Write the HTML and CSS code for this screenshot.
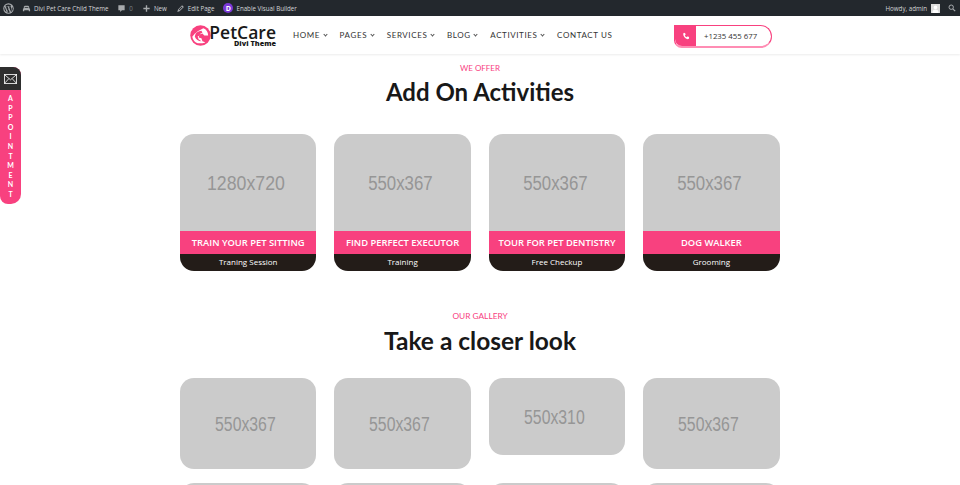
FILE: index.html
```html
<!DOCTYPE html>
<html lang="en">
<head>
  <meta charset="UTF-8">
  <meta name="viewport" content="width=device-width, initial-scale=1.0">
  <title>Pet Care</title>
  <link rel="stylesheet" href="styles.css">
</head>
<body>
  <div class="adminBar">
    <div class="adminLeft">
      <svg class="wpLogo" viewBox="0 0 20 20"><circle cx="10" cy="10" r="9.5" fill="#a7aaad"/><path d="M2.5 10c0 3 1.700 5.500 4.200 6.700L3.100 7a7.500 7.500 0 0 0-.6 3zm12.500-.4c0-.9-.3-1.600-.6-2.100-.4-.6-.7-1.100-.7-1.700 0-.7.500-1.300 1.200-1.300A7.500 7.500 0 0 0 3.600 6.100h.5c.8 0 2-.1 2-.1.400 0 .5.600.1.600 0 0-.4.100-.9.100l2.800 8.400 1.700-5.100-1.200-3.300c-.4 0-.8-.1-.8-.1-.4 0-.4-.6 0-.6 0 0 1.300.1 2 .1.800 0 2-.1 2-.1.400 0 .5.600.1.600 0 0-.4.100-.9.100l2.800 8.300.8-2.500c.3-1 .6-1.800.6-2.500zM10.100 10.700l-2.300 6.700a7.500 7.500 0 0 0 4.600-.1l-.1-.1zm6.600-4.300c0 .3.100.6.100 1 0 .8-.2 1.700-.6 2.800l-2.300 6.700A7.500 7.500 0 0 0 16.700 6.400z" fill="#23282d"/></svg>
      <span class="adminItem">
        <svg class="adminIcon" viewBox="0 0 20 20"><path d="M2 16v-3c0-2 1-3 2-4V6c1-2 3-2 6-2s5 0 6 2v3c1 1 2 2 2 4v3h-3v-2H5v2zM6 9h8V7H6z" fill="#a7aaad"/></svg>
        Divi Pet Care Child Theme
      </span>
      <span class="adminItem muted">
        <svg class="adminIcon" viewBox="0 0 20 20"><path d="M3 3h14v11h-6l-4 4v-4H3z" fill="#a7aaad"/></svg>
        0
      </span>
      <span class="adminItem">
        <svg class="adminIcon" viewBox="0 0 20 20"><path d="M8.500 3h3v5.500H17v3h-5.500V17h-3v-5.500H3v-3h5.500z" fill="#a7aaad"/></svg>
        New
      </span>
      <span class="adminItem">
        <svg class="adminIcon" viewBox="0 0 20 20"><path d="M13.500 2.500l4 4L8 16l-5 1.500L4.500 12zM6 12.500l1.500 1.500 7-7L13 5.500z" fill="#a7aaad"/></svg>
        Edit Page
      </span>
      <span class="adminItem">
        <span class="diviBadge">D</span>
        Enable Visual Builder
      </span>
    </div>
    <div class="adminRight">
      <span>Howdy, admin</span>
      <svg class="avatar" viewBox="0 0 10 10"><rect width="10" height="10" fill="#ddd"/><circle cx="5" cy="3.800" r="2" fill="#fff"/><path d="M1.500 10c0-3 1.500-4 3.500-4s3.500 1 3.500 4z" fill="#fff"/></svg>
      <svg class="searchIcon" viewBox="0 0 20 20"><circle cx="8" cy="8" r="5.500" fill="none" stroke="#a7aaad" stroke-width="2.500"/><path d="M12 12l6 6" stroke="#a7aaad" stroke-width="3"/></svg>
    </div>
  </div>

  <header class="siteHeader">
    <div class="headerRow">
      <div class="logo">
        <svg class="logoMark" viewBox="0 0 22 22">
          <circle cx="11" cy="11" r="10.700" fill="#f8417f"/>
          <path d="M14 3.500c3 1 5 4 5 7.500h-4l-2-2-3 1-1 3 3 1 1 3 3 1c-1 .6-2.500 1-4 1H8c-3-1-5.500-4-5.500-7 1-1 2-3 4-4 2-2 5-3 7.500-4.500z" fill="#fff"/>
          <path d="M6 9c2-2 4-3 6-3l1 2-2 1-1 2-2 1 1 3 3 2c-3 0-6-2-7-5z" fill="#f8417f"/>
        </svg>
        <div class="logoText">
          <span class="logoName">PetCare</span>
          <span class="logoSub">Divi Theme</span>
        </div>
      </div>
      <nav class="mainNav">
        <a>HOME <i class="caret"></i></a>
        <a>PAGES <i class="caret"></i></a>
        <a>SERVICES <i class="caret"></i></a>
        <a>BLOG <i class="caret"></i></a>
        <a>ACTIVITIES <i class="caret"></i></a>
        <a>CONTACT US</a>
      </nav>
      <div class="phoneBox">
        <span class="phoneIcon">
          <svg viewBox="0 0 20 20"><path d="M5 2l3 1 1 4-2 2c1 2 2 3 4 4l2-2 4 1 1 3c-1 2-2 3-4 3C8 17 3 11 3 5c0-1 1-2 2-3z" fill="#fff"/></svg>
        </span>
        <span class="phoneNum">+1235 455 677</span>
      </div>
    </div>
  </header>

  <aside class="sideTab">
    <div class="sideMail">
      <svg viewBox="0 0 16 12"><rect x=".5" y=".5" width="15" height="11" fill="none" stroke="#fff"/><path d="M.5.500L8 7l7.500-6.500M.5 11.500L6 5.500M15.500 11.500L10 5.500" fill="none" stroke="#fff"/></svg>
    </div>
    <div class="sideLabel">
      <span>A</span><span>P</span><span>P</span><span>O</span><span>I</span><span>N</span><span>T</span><span>M</span><span>E</span><span>N</span><span>T</span>
    </div>
  </aside>

  <section class="offer">
    <p class="eyebrow">WE OFFER</p>
    <h2 class="title">Add On Activities</h2>
    <div class="cardGrid">
      <div class="card">
        <div class="ph phLarge"><span class="wide">1280x720</span></div>
        <div class="cardName">TRAIN YOUR PET SITTING</div>
        <div class="cardSub">Traning Session</div>
      </div>
      <div class="card">
        <div class="ph phLarge"><span class="mid">550x367</span></div>
        <div class="cardName">FIND PERFECT EXECUTOR</div>
        <div class="cardSub">Training</div>
      </div>
      <div class="card">
        <div class="ph phLarge"><span class="mid">550x367</span></div>
        <div class="cardName">TOUR FOR PET DENTISTRY</div>
        <div class="cardSub">Free Checkup</div>
      </div>
      <div class="card">
        <div class="ph phLarge"><span class="mid">550x367</span></div>
        <div class="cardName">DOG WALKER</div>
        <div class="cardSub">Grooming</div>
      </div>
    </div>
  </section>

  <section class="gallery">
    <p class="eyebrow">OUR GALLERY</p>
    <h2 class="title">Take a closer look</h2>
    <div class="galleryGrid">
      <div class="ph shot"><span class="thin">550x367</span></div>
      <div class="ph shot"><span class="thin">550x367</span></div>
      <div class="ph shot short"><span class="thin">550x310</span></div>
      <div class="ph shot"><span class="thin">550x367</span></div>
      <div class="ph shot"></div>
      <div class="ph shot"></div>
      <div class="ph shot"></div>
      <div class="ph shot"></div>
    </div>
  </section>
</body>
</html>
```

FILE: styles.css
```css
html, body{
  height: 485px;
  overflow: hidden;
}
body{
  margin: 0;
  background: white;
  color: #181818;
  font-family: "Lato", "Open Sans", sans-serif;
}

/* admin bar */
.adminBar{
  height: 16px;
  background: #23282d;
  color: #d5d7d9;
  font-family: "Open Sans", sans-serif;
  font-size: 6.2px;
  display: flex;
  justify-content: space-between;
  align-items: center;
  padding: 0 4px 0 3px;
}
.adminLeft, .adminRight, .adminItem{
  display: flex;
  align-items: center;
}
.adminLeft{
  gap: 9px;
}
.adminItem{
  gap: 3px;
}
.muted{
  color: #7d8286;
}
.wpLogo{
  width: 11px;
  height: 11px;
  margin-right: -1px;
}
.adminIcon{
  width: 9px;
  height: 9px;
}
.diviBadge{
  width: 10px;
  height: 10px;
  border-radius: 50%;
  background: #7b38d8;
  color: white;
  font-size: 7px;
  font-weight: bold;
  display: flex;
  justify-content: center;
  align-items: center;
}
.adminRight{
  gap: 4px;
}
.avatar{
  width: 9px;
  height: 9px;
}
.searchIcon{
  width: 8px;
  height: 8px;
  margin-left: 4px;
}

/* header */
.siteHeader{
  height: 38px;
  background: white;
  box-shadow: 0 1px 2px rgba(0, 0, 0, 0.08);
}
.headerRow{
  width: 582px;
  height: 100%;
  margin-left: 190px;
  display: flex;
  align-items: center;
}
.logo{
  display: flex;
  align-items: center;
  gap: 0;
  width: 103px;
  margin-top: 1px;
}
.logoMark{
  width: 21px;
  height: 21px;
}
.logoText{
  display: flex;
  flex-direction: column;
  align-items: flex-end;
  width: 65px;
}
.logoName{
  font-family: "Open Sans", sans-serif;
  font-size: 17.500px;
  line-height: 15px;
  font-weight: 600;
}
.logoSub{
  font-family: "Open Sans", sans-serif;
  font-size: 7.300px;
  line-height: 7px;
  font-weight: 800;
}
.mainNav{
  display: flex;
  gap: 13px;
  font-size: 8px;
  letter-spacing: 0.6px;
  color: #333;
  font-weight: 400;
}
.caret{
  display: inline-block;
  width: 2px;
  height: 2px;
  margin: 0 0 2px 1px;
  border-right: 1px solid #555;
  border-bottom: 1px solid #555;
  transform: rotate(45deg);
}
.phoneBox{
  margin-left: auto;
  width: 98px;
  height: 23px;
  box-sizing: border-box;
  display: flex;
  align-items: center;
  border: 1px solid #f8417f;
  border-bottom-width: 2px;
  border-color: #f8417f #f8417f #ff8db4 #f8417f;
  border-radius: 0 12px 12px 8px;
  margin-top: 3px;
}
.phoneIcon{
  width: 21px;
  height: 100%;
  background: #f8417f;
  border-radius: 0 0 0 7px;
  display: flex;
  justify-content: center;
  align-items: center;
}
.phoneIcon svg{
  width: 8px;
  height: 8px;
}
.phoneNum{
  margin-left: 8px;
  font-family: "Open Sans", sans-serif;
  font-size: 7.800px;
  color: #333;
}

/* floating side tab */
.sideTab{
  position: absolute;
  left: 0;
  top: 67px;
  width: 21px;
  height: 137px;
  border-radius: 0 8px 10px 8px;
  overflow: hidden;
  background: #f8417f;
}
.sideMail{
  height: 23px;
  background: #2e2e2e;
  display: flex;
  justify-content: center;
  align-items: center;
}
.sideMail svg{
  width: 13px;
  height: 10px;
}
.sideLabel{
  display: flex;
  flex-direction: column;
  align-items: center;
  padding-top: 4px;
  color: white;
  font-size: 7px;
  line-height: 9.600px;
  font-weight: bold;
}

/* sections */
.offer, .gallery{
  width: 600px;
  margin: 0 auto;
  text-align: center;
}
.offer{
  padding-top: 10px;
}
.gallery{
  padding-top: 41px;
}
.eyebrow{
  margin: 0;
  font-size: 8px;
  line-height: 9px;
  color: #f8417f;
}
.title{
  margin: 3px 0 0;
  font-size: 24px;
  line-height: 32px;
  font-weight: bold;
  color: #181818;
}
.gallery .title{
  margin-top: 4px;
  font-size: 24.500px;
}
.gallery .eyebrow{
  font-size: 8.300px;
}
.cardGrid, .galleryGrid{
  display: grid;
  grid-template-columns: repeat(4, 136.400px);
  column-gap: 18px;
  align-items: start;
}
.cardGrid{
  margin-top: 26px;
}
.galleryGrid{
  margin-top: 21px;
  row-gap: 14px;
}
.card{
  border-radius: 14px;
  overflow: hidden;
}
.ph{
  box-sizing: border-box;
  background: #cbcbcb;
  color: #969696;
  font-family: "Liberation Sans", sans-serif;
  font-size: 20px;
  display: flex;
  justify-content: center;
  align-items: center;
  padding: 2px 4px 0 0;
}
.shot{
  padding-right: 6px;
}
.wide{
  transform: scaleX(0.886);
}
.mid{
  transform: scaleX(0.84);
}
.thin{
  transform: scaleX(0.79);
}
.phLarge{
  height: 97px;
}
.cardName{
  height: 23px;
  line-height: 23px;
  background: #f8417f;
  color: white;
  font-family: "Open Sans", sans-serif;
  font-size: 9.400px;
  font-weight: 600;
}
.cardSub{
  height: 17px;
  line-height: 16px;
  background: #231c18;
  color: white;
  font-family: "Open Sans", sans-serif;
  font-size: 8px;
}
.shot{
  height: 91px;
  border-radius: 14px;
}
.short{
  height: 77px;
}
```
